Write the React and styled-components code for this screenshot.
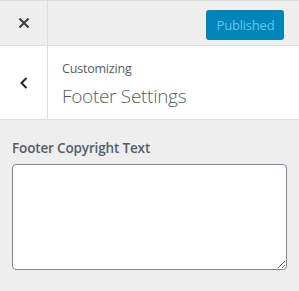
import React from "react";
import styled, { createGlobalStyle } from "styled-components";

const Global = createGlobalStyle`
  html, body { margin: 0; padding: 0; }
  body {
    background: #eeeeee;
    font-family: "Open Sans", "Noto Sans", sans-serif;
    color: #555d66;
  }
  * { box-sizing: border-box; }
`;

const Sidebar = styled.div`
  width: 299px;
  height: 291px;
  background: #eeeeee;
  display: flex;
  flex-direction: column;
`;

const TopBar = styled.div`
  height: 46px;
  border-top: 1px solid #dddddd;
  border-bottom: 1px solid #dddddd;
  display: flex;
  align-items: center;
  background: #eeeeee;
`;

const CloseButton = styled.button`
  width: 48px;
  height: 100%;
  border: 0;
  border-right: 1px solid #dddddd;
  background: transparent;
  display: flex;
  align-items: center;
  justify-content: center;
  padding: 0;
  color: #444444;
`;

const PublishButton = styled.button`
  margin: 4px 15px 0 auto;
  width: 78px;
  height: 30px;
  border: 0;
  border-radius: 3px;
  background: #0085ba;
  color: #66c6e4;
  font-family: "Open Sans", "Noto Sans", sans-serif;
  font-size: 13px;
  padding: 0 0 0 1px;
  letter-spacing: -0.2px;
`;

const Header = styled.div`
  height: 74px;
  background: #ffffff;
  border-bottom: 1px solid #dddddd;
  display: flex;
`;

const BackButton = styled.button`
  width: 48px;
  height: 100%;
  border: 0;
  border-right: 1px solid #dddddd;
  background: transparent;
  display: flex;
  align-items: center;
  justify-content: center;
  padding: 0;
  color: #23282d;
`;

const TitleBlock = styled.div`
  padding: 13px 0 0 14px;
  display: flex;
  flex-direction: column;
`;

const Kicker = styled.span`
  font-size: 12.5px;
  line-height: 20px;
  color: #555d66;
  letter-spacing: -0.2px;
`;

const Title = styled.h2`
  margin: 4px 0 0;
  font-size: 19px;
  font-weight: 300;
  line-height: 26px;
  color: #555d66;
  letter-spacing: -0.3px;
`;

const Section = styled.div`
  padding: 16px 12px 0;
  display: flex;
  flex-direction: column;
`;

const Label = styled.label`
  font-size: 13.5px;
  font-weight: 600;
  line-height: 24px;
  color: #555d66;
  letter-spacing: -0.15px;
  margin-bottom: 4px;
`;

const TextArea = styled.textarea`
  width: 275px;
  height: 106px;
  border: 1px solid #7e8993;
  border-radius: 4px;
  background: #ffffff;
  margin: 0;
  resize: vertical;
  font-family: "Open Sans", sans-serif;
`;

export default function App() {
  return (
    <>
      <Global />
      <Sidebar>
        <TopBar>
          <CloseButton aria-label="Close">
            <svg width="12" height="12" viewBox="0 0 12 12">
              <path d="M1.5 1.5 L10.5 10.5 M10.5 1.5 L1.5 10.5" stroke="#444" strokeWidth="2.2" strokeLinecap="butt" />
            </svg>
          </CloseButton>
          <PublishButton disabled>Published</PublishButton>
        </TopBar>
        <Header>
          <BackButton aria-label="Back">
            <svg width="10" height="12" viewBox="0 0 10 12">
              <path d="M7.5 1 L2.5 6 L7.5 11" stroke="#23282d" strokeWidth="2" fill="none" />
            </svg>
          </BackButton>
          <TitleBlock>
            <Kicker>Customizing</Kicker>
            <Title>Footer Settings</Title>
          </TitleBlock>
        </Header>
        <Section>
          <Label>Footer Copyright Text</Label>
          <TextArea />
        </Section>
      </Sidebar>
    </>
  );
}
